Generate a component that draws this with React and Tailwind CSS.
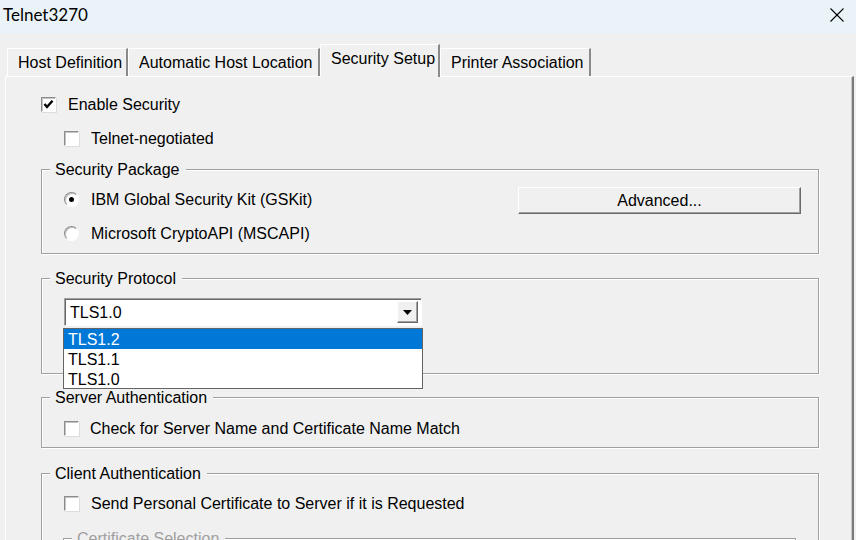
import React from "react";

const etched = "border border-[#a0a0a0] shadow-[inset_1px_1px_0_#ffffff,1px_1px_0_#ffffff]";

function CheckBox({ checked }) {
    return (
        <span className="w-[15px] h-[15px] shrink-0 border border-t-[#8c8c8c] border-l-[#8c8c8c] border-b-white border-r-white bg-white shadow-[inset_1px_1px_0_#c4c4c4,1px_1px_0_#dcdcdc] flex items-center justify-center">
            {checked ? (
                <svg width="11" height="11" viewBox="0 0 11 11">
                    <polyline points="1.5,5 4,8 9.5,1.8" fill="none" stroke="#000" strokeWidth="2.4" />
                </svg>
            ) : null}
        </span>
    );
}

function Radio({ checked }) {
    return (
        <span className="w-[15px] h-[15px] shrink-0 rounded-full border border-t-[#8c8c8c] border-l-[#8c8c8c] border-b-white border-r-white bg-white shadow-[inset_1px_1px_0_#c4c4c4] flex items-center justify-center">
            {checked ? <span className="w-[5px] h-[5px] rounded-full bg-black"></span> : null}
        </span>
    );
}

function GroupBox({ label, className, children, disabled }) {
    return (
        <div className={`${etched} ${className}`}>
            <span className={`block w-fit -mt-[11px] ml-[8px] pl-[5px] pr-[6px] h-[20px] pt-[1px] leading-[20px] bg-[#f0f0f0] ${disabled ? "text-[#a0a0a0]" : ""}`}>
                {label}
            </span>
            {children}
        </div>
    );
}

const tabs = [
    { name: "Host Definition", w: "w-[121px]" },
    { name: "Automatic Host Location", w: "w-[192px]" },
    { name: "Security Setup", w: "w-[120px]", active: true },
    { name: "Printer Association", w: "w-[151px]" },
];

export default function App() {
    return (
        <div className="w-[856px] h-[540px] overflow-hidden bg-[#f0f0f0] text-black text-[16px] font-['Liberation_Sans',Arial,sans-serif]">
            {/* title bar */}
            <div className="h-[34px] bg-[#eaf4f8] flex items-center justify-between pl-[3px] pr-[12px]">
                <span className="text-[17px] font-['Lato',sans-serif] -mt-[5px]">Telnet3270</span>
                <svg width="14" height="14" viewBox="0 0 14 14" className="-mt-[4px]">
                    <line x1="0.5" y1="0.5" x2="13.5" y2="13.5" stroke="#000" strokeWidth="1.1" />
                    <line x1="13.5" y1="0.5" x2="0.5" y2="13.5" stroke="#000" strokeWidth="1.1" />
                </svg>
            </div>

            {/* tabs */}
            <div className="mt-[10px] h-[32px] flex items-end pl-[7px] relative z-10">
                {tabs.map((t) =>
                    t.active ? (
                        <div key={t.name} className={`${t.w} h-[33px] -mb-px bg-[#f0f0f0] border-t border-l border-white border-r-2 border-r-[#8a8a8a] pl-[10px] pt-[3px] leading-[22px]`}>
                            {t.name}
                        </div>
                    ) : (
                        <div key={t.name} className={`${t.w} h-[28px] border-t border-l border-white border-r-2 border-r-[#8a8a8a] pl-[10px] pt-[3px] leading-[22px]`}>
                            {t.name}
                        </div>
                    )
                )}
            </div>

            {/* panel */}
            <div className="ml-[5px] w-[849px] h-[500px] border-t border-l border-white border-r-2 border-r-[#7a7a7a] shadow-[inset_-1px_0_0_#c8c8c8]">
                <div className="mt-[17px] ml-[35px] h-[20px] flex items-center gap-[12px]">
                    <CheckBox checked />
                    <span className="pt-[2px]">Enable Security</span>
                </div>
                <div className="mt-[14px] ml-[58px] h-[20px] flex items-center gap-[12px]">
                    <CheckBox />
                    <span className="pt-[2px]">Telnet-negotiated</span>
                </div>

                <GroupBox label="Security Package" className="mt-[21px] ml-[35px] w-[778px] h-[85px]">
                    <div className="flex">
                        <div className="ml-[22px]">
                            <div className="mt-[10px] h-[20px] flex items-center gap-[12px]">
                                <Radio checked />
                                <span className="pt-[2px]">IBM Global Security Kit (GSKit)</span>
                            </div>
                            <div className="mt-[14px] h-[20px] flex items-center gap-[12px]">
                                <Radio />
                                <span className="pt-[2px]">Microsoft CryptoAPI (MSCAPI)</span>
                            </div>
                        </div>
                        <button className="ml-auto mr-[17px] mt-[8px] w-[283px] h-[27px] bg-[#f0f0f0] border border-t-white border-l-white border-b-[#696969] border-r-[#696969] shadow-[inset_-1px_-1px_0_#a0a0a0] flex items-center justify-center pt-[1px]">
                            Advanced...
                        </button>
                    </div>
                </GroupBox>

                <GroupBox label="Security Protocol" className="mt-[24px] ml-[35px] w-[778px] h-[96px]">
                    <div className="relative mt-[10px] ml-[22px] w-[358px] h-[28px] bg-white border border-t-[#a0a0a0] border-l-[#a0a0a0] border-b-white border-r-white shadow-[inset_1px_1px_0_#696969] flex items-center">
                        <span className="pl-[5px] pt-[2px] flex-1">TLS1.0</span>
                        <span className="mr-[3px] w-[21px] h-[22px] bg-[#f0f0f0] border border-t-white border-l-white border-b-[#696969] border-r-[#696969] shadow-[inset_-1px_-1px_0_#a0a0a0] flex items-center justify-center">
                            <svg width="9" height="5" viewBox="0 0 9 5">
                                <polygon points="0,0 9,0 4.5,5" fill="#000" />
                            </svg>
                        </span>
                        <div className="absolute top-[29px] -left-[2px] w-[360px] bg-white border border-[#646464] z-20">
                            <div className="h-[20px] leading-[20px] pt-[1px] pl-[4px] bg-[#0078d7] text-white">TLS1.2</div>
                            <div className="h-[20px] leading-[20px] pt-[1px] pl-[4px]">TLS1.1</div>
                            <div className="h-[19px] leading-[19px] pt-[1px] pl-[4px]">TLS1.0</div>
                        </div>
                    </div>
                </GroupBox>

                <GroupBox label="Server Authentication" className="mt-[23px] ml-[35px] w-[778px] h-[51px]">
                    <div className="mt-[11px] ml-[22px] h-[20px] flex items-center gap-[11px]">
                        <CheckBox />
                        <span className="pt-[2px]">Check for Server Name and Certificate Name Match</span>
                    </div>
                </GroupBox>

                <GroupBox label="Client Authentication" className="mt-[25px] ml-[35px] w-[778px] h-[120px]">
                    <div className="mt-[10px] ml-[22px] h-[20px] flex items-center gap-[12px]">
                        <CheckBox />
                        <span className="pt-[2px]">Send Personal Certificate to Server if it is Requested</span>
                    </div>
                    <GroupBox label="Certificate Selection" disabled className="mt-[25px] ml-[21px] w-[733px] h-[60px]" />
                </GroupBox>
            </div>
        </div>
    );
}
